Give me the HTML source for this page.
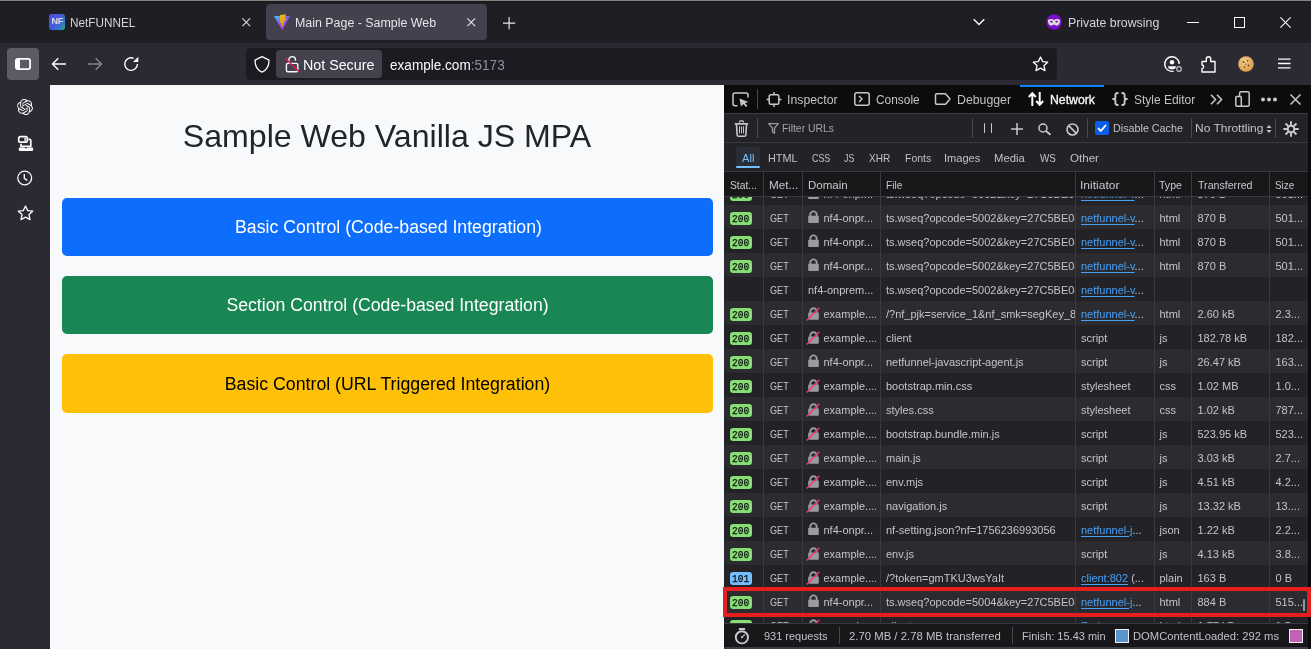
<!DOCTYPE html>
<html><head><meta charset="utf-8">
<style>
*{box-sizing:border-box;margin:0;padding:0}
html,body{width:1311px;height:649px;overflow:hidden;background:#1f1e25;font-family:"Liberation Sans",sans-serif;position:relative}
.a{position:absolute}
.t{position:absolute;white-space:nowrap;line-height:1}
svg{position:absolute;overflow:visible}
</style></head><body><div id="wrap" style="position:absolute;left:0;top:0;width:1311px;height:649px;overflow:hidden;will-change:transform">
<!-- top line -->
<div class="a" style="left:0;top:0;width:1311px;height:1px;background:#858482"></div>
<div class="a" style="left:0;top:1px;width:1311px;height:1px;background:#1a191e"></div>

<!-- TAB STRIP -->
<div id="tabs">
<div class="a" style="left:49px;top:14px;width:16px;height:16px;border-radius:3px;background:linear-gradient(125deg,#4c4fe4 0%,#4458dc 45%,#3577c4 75%,#1fb48c 100%)"></div>
<div class="t" style="left:50px;top:17.4px;width:14.4px;text-align:center;font-size:9px;font-weight:bold;color:#dcdce6;letter-spacing:-0.2px">NF</div>
<div id="netfunnel" class="t" style="left:70.5px;top:17px;font-size:12px;color:#d4d4da">NetFUNNEL</div>
<svg style="left:241.5px;top:18px" width="8.5" height="8.5" viewBox="0 0 8.5 8.5"><path d="M0.4 0.4L8.1 8.1M8.1 0.4L0.4 8.1" stroke="#d8d8de" stroke-width="1.15"/></svg>
<div class="a" style="left:266px;top:4px;width:221px;height:36px;border-radius:4px;background:#42414d"></div>
<svg style="left:274px;top:14px" width="16" height="17" viewBox="0 0 16 17"><defs><linearGradient id="vg" x1="0" y1="0" x2="0.75" y2="1"><stop offset="0" stop-color="#3fc3ee"/><stop offset="0.5" stop-color="#8a5cf0"/><stop offset="1" stop-color="#b02ae8"/></linearGradient><linearGradient id="vy" x1="0" y1="0" x2="0" y2="1"><stop offset="0" stop-color="#e6b82a"/><stop offset="1" stop-color="#e49a00"/></linearGradient></defs><path d="M0 2L16 2L8.2 16.2Z" fill="url(#vg)"/><path d="M5.9 0.9L11.9 0.3L10.8 4.3L12.3 4.5L9.2 9.6L9.9 9.7L7.9 13.8L7.3 8.9L6.1 8.8Z" fill="url(#vy)"/></svg>
<div id="maintab" class="t" style="left:295.5px;top:17px;font-size:12px;color:#e4e4ea">Main Page - Sample Web</div>
<svg style="left:466.8px;top:17.8px" width="8.5" height="8.5" viewBox="0 0 8.5 8.5"><path d="M0.4 0.4L8.1 8.1M8.1 0.4L0.4 8.1" stroke="#e0e0e6" stroke-width="1.15"/></svg>
<svg style="left:502.6px;top:16.9px" width="12.2" height="12.2" viewBox="0 0 12.2 12.2"><path d="M6.1 0V12.2M0 6.1H12.2" stroke="#e6e6ea" stroke-width="1.15"/></svg>
<svg style="left:973px;top:18px" width="12" height="8" viewBox="0 0 12 8"><path d="M0.7 1.2L6 6.5L11.3 1.2" stroke="#fbfbfe" stroke-width="1.4" fill="none"/></svg>
<svg style="left:1046px;top:14px" width="16" height="16" viewBox="0 0 16 16"><circle cx="8" cy="8" r="7.7" fill="#7a0fca"/><path d="M2 6C3.8 4.6 6.2 4.8 8 6C9.8 4.8 12.2 4.6 14 6C14.3 9.5 12.8 11.6 10.5 11.6C9.3 11.6 8.7 10.5 8 10.5C7.3 10.5 6.7 11.6 5.5 11.6C3.2 11.6 1.7 9.5 2 6Z" fill="#dcdcd6"/><path d="M3.8 7.3C4.8 6.6 6 6.8 6.9 7.6C6.4 8.9 4.7 9.2 3.8 7.3Z" fill="#7a0fca"/><path d="M12.2 7.3C11.2 6.6 10 6.8 9.1 7.6C9.6 8.9 11.3 9.2 12.2 7.3Z" fill="#7a0fca"/></svg>
<div id="private" class="t" style="left:1068.5px;top:17px;font-size:12px;color:#d4d4da">Private browsing</div>
<div class="a" style="left:1187px;top:22px;width:12px;height:1px;background:#fbfbfe"></div>
<div class="a" style="left:1234px;top:17px;width:10.5px;height:10.5px;border:1px solid #fbfbfe"></div>
<svg style="left:1279.5px;top:17px" width="11" height="11" viewBox="0 0 11 11"><path d="M0.4 0.4L10.6 10.6M10.6 0.4L0.4 10.6" stroke="#fbfbfe" stroke-width="1.1"/></svg>
</div>

<!-- TOOLBAR -->
<div class="a" style="left:0;top:43px;width:1311px;height:42px;background:#2b2a33"></div>
<div class="a" style="left:7px;top:48px;width:32px;height:32px;border-radius:4px;background:#5b5b66"></div>
<svg style="left:15px;top:58px" width="16" height="12" viewBox="0 0 16 12"><rect x="0.9" y="0.9" width="14.2" height="10.2" rx="1.8" fill="none" stroke="#fbfbfe" stroke-width="1.8"/><rect x="1" y="1" width="4" height="10" fill="#fbfbfe"/></svg>
<svg style="left:51px;top:57px" width="16" height="14" viewBox="0 0 16 14"><path d="M15 7H1.8M7.3 1.3L1.5 7L7.3 12.7" stroke="#fbfbfe" stroke-width="1.5" fill="none"/></svg>
<svg style="left:87px;top:57px" width="16" height="14" viewBox="0 0 16 14"><path d="M1 7H14.2M8.7 1.3L14.5 7L8.7 12.7" stroke="#85858f" stroke-width="1.4" fill="none"/></svg>
<svg style="left:123px;top:56px" width="16" height="16" viewBox="0 0 16 16"><path d="M14.4 8.1A6.3 6.3 0 1 1 10.6 2.3" stroke="#fbfbfe" stroke-width="1.4" fill="none"/><path d="M10 6.1L15.3 6.1L15.3 0.7Z" fill="#fbfbfe"/></svg>
<div class="a" style="left:246px;top:48px;width:811px;height:32px;border-radius:4px;background:#1c1b22"></div>
<svg style="left:254px;top:56px" width="16" height="17" viewBox="0 0 16 17"><path d="M8 0.7L15 4.2C15 10 12.5 14.2 8 16.1C3.5 14.2 1 10 1 4.2Z" stroke="#fbfbfe" stroke-width="1.3" fill="none" stroke-linejoin="round"/></svg>
<div class="a" style="left:276px;top:50px;width:106px;height:28px;border-radius:4px;background:#42414d"></div>
<svg style="left:284px;top:56px" width="16" height="17" viewBox="0 0 16 17"><path d="M4.9 7.4V3.9A3.3 3.3 0 0 1 11.5 3.9V4.8" stroke="#fbfbfe" stroke-width="1.4" fill="none"/><rect x="2.4" y="7.4" width="11.4" height="8.4" rx="1.5" stroke="#fbfbfe" stroke-width="1.4" fill="none"/><path d="M1.2 2.3L14.8 15.5" stroke="#e8174a" stroke-width="1.5"/></svg>
<div id="notsecure" class="t" style="left:304px;top:58.2px;font-size:14px;color:#fbfbfe">Not Secure</div>
<div id="url" class="t" style="left:390px;top:58.2px;font-size:14px;color:#fbfbfe">example.com<span style="color:#8f8f9d">:5173</span></div>
<svg style="left:1032px;top:56px" width="17" height="16" viewBox="0 0 17 16"><path d="M8.5 1L10.7 5.6L15.7 6.2L12 9.6L13 14.6L8.5 12.1L4 14.6L5 9.6L1.3 6.2L6.3 5.6Z" stroke="#fbfbfe" stroke-width="1.3" fill="none" stroke-linejoin="round"/></svg>
<svg style="left:1164px;top:56px" width="19" height="17" viewBox="0 0 19 17"><path d="M15.3 8A7.3 7.3 0 1 0 9.5 15.2" stroke="#fbfbfe" stroke-width="1.4" fill="none"/><circle cx="8" cy="6.2" r="2.2" fill="#fbfbfe"/><path d="M4 10.2H12L11.4 12.2C10.5 13 9.5 13.3 8 13.3C6.5 13.3 5.5 13 4.6 12.2Z" fill="#fbfbfe"/><circle cx="15" cy="13" r="2.3" stroke="#bfbfc9" stroke-width="1.2" fill="none"/></svg>
<svg style="left:1201px;top:56px" width="16" height="17" viewBox="0 0 16 17"><path d="M1 5.5H5.3V3A2.2 2.2 0 0 1 9.7 3V5.5H14V16H1V12.4A1.7 1.7 0 0 0 1 9Z" stroke="#fbfbfe" stroke-width="1.4" fill="none" stroke-linejoin="round"/></svg>
<svg style="left:1238px;top:56px" width="16" height="16" viewBox="0 0 16 16"><defs><radialGradient id="ck" cx="0.4" cy="0.35" r="0.7"><stop offset="0" stop-color="#f5c98a"/><stop offset="1" stop-color="#d89a4a"/></radialGradient></defs><circle cx="8" cy="8" r="7.8" fill="url(#ck)"/><circle cx="5.5" cy="6" r="0.9" fill="#6b3d1c"/><circle cx="9.5" cy="4.8" r="0.8" fill="#6b3d1c"/><circle cx="10.5" cy="9.5" r="0.9" fill="#6b3d1c"/><circle cx="6.5" cy="11" r="0.8" fill="#6b3d1c"/><circle cx="7.8" cy="8.2" r="0.6" fill="#6b3d1c"/></svg>
<svg style="left:1278px;top:58px" width="13" height="11" viewBox="0 0 13 11"><path d="M0 1.2H12.5M0 5.5H12.5M0 9.8H12.5" stroke="#fbfbfe" stroke-width="1.3"/></svg>

<!-- SIDEBAR -->
<div class="a" style="left:0;top:85px;width:50px;height:564px;background:#2b2a33"></div>
<svg style="left:17px;top:99px" width="16" height="16" viewBox="0 0 24 24"><path fill="#fbfbfe" d="M22.28 9.82a5.98 5.98 0 0 0-.52-4.91 6.05 6.05 0 0 0-6.51-2.9A6.07 6.07 0 0 0 4.98 4.18a5.98 5.98 0 0 0-4 2.9 6.05 6.05 0 0 0 .74 7.1 5.98 5.98 0 0 0 .51 4.91 6.05 6.05 0 0 0 6.52 2.9A5.98 5.98 0 0 0 13.26 24a6.06 6.06 0 0 0 5.77-4.21 5.99 5.99 0 0 0 4-2.9 6.06 6.06 0 0 0-.75-7.07zM13.26 22.43a4.48 4.48 0 0 1-2.88-1.04l.14-.08 4.78-2.76a.8.8 0 0 0 .39-.68v-6.74l2.02 1.17a.07.07 0 0 1 .04.05v5.58a4.5 4.5 0 0 1-4.49 4.5zM3.6 18.3a4.47 4.47 0 0 1-.54-3.01l.14.09 4.78 2.76a.77.77 0 0 0 .78 0l5.84-3.37v2.33a.08.08 0 0 1-.03.06L9.74 19.95a4.5 4.5 0 0 1-6.14-1.65zM2.34 7.9a4.49 4.49 0 0 1 2.37-1.97V11.6a.77.77 0 0 0 .39.68l5.81 3.36-2.02 1.17a.08.08 0 0 1-.07 0l-4.83-2.79A4.5 4.5 0 0 1 2.34 7.87zm16.6 3.86L13.1 8.36 15.12 7.2a.08.08 0 0 1 .07 0l4.83 2.79a4.49 4.49 0 0 1-.68 8.1v-5.68a.79.79 0 0 0-.4-.66zm2.01-3.02l-.14-.09-4.77-2.78a.78.78 0 0 0-.79 0L9.41 9.23V6.9a.07.07 0 0 1 .03-.06l4.83-2.79a4.5 4.5 0 0 1 6.68 4.66zM8.31 12.86L6.29 11.7a.08.08 0 0 1-.04-.06V6.07a4.5 4.5 0 0 1 7.38-3.45l-.14.08L8.7 5.46a.8.8 0 0 0-.39.68zm1.1-2.37l2.6-1.5 2.61 1.5v3l-2.6 1.5-2.61-1.5z"/></svg>
<svg style="left:17px;top:135px" width="17" height="17" viewBox="0 0 17 17"><rect x="1.7" y="1.7" width="8.6" height="5.4" rx="1.7" stroke="#fbfbfe" stroke-width="1.7" fill="none"/><rect x="7.4" y="2.6" width="1.4" height="3.6" fill="#fbfbfe"/><path d="M11.3 4.4H12.8A1 1 0 0 1 13.8 5.4V11.3H4V8.8" stroke="#fbfbfe" stroke-width="1.7" fill="none"/><rect x="1.8" y="12.6" width="14.3" height="3.3" rx="0.9" fill="#fbfbfe"/><ellipse cx="8.9" cy="12.7" rx="1.3" ry="0.6" fill="#2b2a33"/></svg>
<svg style="left:17px;top:170px" width="16" height="16" viewBox="0 0 16 16"><circle cx="7.7" cy="8" r="6.9" stroke="#fbfbfe" stroke-width="1.3" fill="none"/><path d="M7.3 3.9V8.4L10.3 10.4" stroke="#fbfbfe" stroke-width="1.3" fill="none"/></svg>
<svg style="left:16.5px;top:205px" width="17" height="16" viewBox="0 0 17 16"><path d="M8.5 1L10.7 5.6L15.7 6.2L12 9.6L13 14.6L8.5 12.1L4 14.6L5 9.6L1.3 6.2L6.3 5.6Z" stroke="#fbfbfe" stroke-width="1.3" fill="none" stroke-linejoin="round"/></svg>

<!-- PAGE -->
<div class="a" style="left:50px;top:85px;width:674px;height:564px;background:#f8f9fa"></div>
<div id="title" class="t" style="left:50px;width:674px;text-align:center;top:119.9px;font-size:32px;color:#212529">Sample Web Vanilla JS MPA</div>
<div class="a" style="left:62px;top:198px;width:651px;height:58px;border-radius:5px;background:#0d6efd"></div>
<div id="btn1" class="t" style="left:62px;width:651px;text-align:center;top:219.1px;font-size:17.6px;color:#fff">Basic Control (Code-based Integration)</div>
<div class="a" style="left:62px;top:276px;width:651px;height:58px;border-radius:5px;background:#198754"></div>
<div id="btn2" class="t" style="left:62px;width:651px;text-align:center;top:297.1px;font-size:17.6px;color:#fff">Section Control (Code-based Integration)</div>
<div class="a" style="left:62px;top:354px;width:651px;height:58.6px;border-radius:5px;background:#ffc107"></div>
<div id="btn3" class="t" style="left:62px;width:651px;text-align:center;top:376.1px;font-size:17.6px;color:#000">Basic Control (URL Triggered Integration)</div>

<!-- DEVTOOLS -->
<div class="a" style="left:724px;top:85px;width:587px;height:564px;background:#0c0c0d"></div>
<div class="a" style="left:724px;top:85px;width:584px;height:28px;background:#0c0c0d"></div>
<div class="a" style="left:724px;top:113px;width:584px;height:1px;background:#3a3a3f"></div>
<div class="a" style="left:724px;top:114px;width:584px;height:28px;background:#232327"></div>
<div class="a" style="left:724px;top:142px;width:584px;height:1px;background:#3a3a3f"></div>
<div class="a" style="left:724px;top:143px;width:584px;height:28px;background:#232327"></div>
<div class="a" style="left:724px;top:171px;width:584px;height:1px;background:#3a3a3f"></div>
<div class="a" style="left:724px;top:172px;width:584px;height:24px;background:#18181a"></div>
<div class="a" style="left:724px;top:196px;width:584px;height:1px;background:#3a3a3f"></div>
<div class="a" style="left:724px;top:197px;width:584px;height:426px;overflow:hidden">
<div class="a" style="left:-724px;top:-197px;width:1311px;height:649px">
<div class="a" style="left:724px;top:181px;width:584px;height:24px;background:#232327"></div>
<div class="a" style="left:730px;top:188px;width:22px;height:13px;border-radius:3px;background:#86de74"></div>
<div class="t" style="left:732.3px;top:190.6px;font-family:'Liberation Mono';font-size:10px;color:#0c0c0d;-webkit-text-stroke:0.25px #0c0c0d;transform:scaleX(0.95);transform-origin:0 0">200</div>
<div class="t" style="left:769.5px;top:188.7px;font-size:11px;color:#c4c4c8;transform:scaleX(0.83);transform-origin:0 0">GET</div>
<svg style="left:808px;top:187px" width="11" height="12" viewBox="0 0 11 12"><path d="M2.3 5V3.6A3.2 3.2 0 0 1 8.7 3.6V5" stroke="#9b9b9f" stroke-width="1.9" fill="none"/><rect x="0.2" y="4.8" width="10.6" height="7.2" rx="0.8" fill="#9b9b9f"/></svg>
<div class="t" style="left:823.5px;top:188.7px;font-size:11px;color:#c4c4c8;width:52.5px;overflow:hidden">nf4-onpr...</div>
<div class="t" style="left:886px;top:188.7px;font-size:11px;color:#c4c4c8;width:189px;overflow:hidden">ts.wseq?opcode=5002&amp;key=27C5BE08</div>
<div class="t" style="left:1081px;top:188.7px;font-size:11px;color:#c4c4c8"><span style="color:#45a1f5;text-decoration:underline;text-underline-offset:2px">netfunnel-v</span>...</div>
<div class="t" style="left:1159.5px;top:188.7px;font-size:11px;color:#c4c4c8">html</div>
<div class="t" style="left:1197.5px;top:188.7px;font-size:11px;color:#c4c4c8">870 B</div>
<div class="t" style="left:1275.5px;top:188.7px;font-size:11px;color:#c4c4c8">501...</div>
<div class="a" style="left:724px;top:205px;width:584px;height:24px;background:#2c2b30"></div>
<div class="a" style="left:730px;top:212px;width:22px;height:13px;border-radius:3px;background:#86de74"></div>
<div class="t" style="left:732.3px;top:214.6px;font-family:'Liberation Mono';font-size:10px;color:#0c0c0d;-webkit-text-stroke:0.25px #0c0c0d;transform:scaleX(0.95);transform-origin:0 0">200</div>
<div class="t" style="left:769.5px;top:212.7px;font-size:11px;color:#c4c4c8;transform:scaleX(0.83);transform-origin:0 0">GET</div>
<svg style="left:808px;top:211px" width="11" height="12" viewBox="0 0 11 12"><path d="M2.3 5V3.6A3.2 3.2 0 0 1 8.7 3.6V5" stroke="#9b9b9f" stroke-width="1.9" fill="none"/><rect x="0.2" y="4.8" width="10.6" height="7.2" rx="0.8" fill="#9b9b9f"/></svg>
<div class="t" style="left:823.5px;top:212.7px;font-size:11px;color:#c4c4c8;width:52.5px;overflow:hidden">nf4-onpr...</div>
<div class="t" style="left:886px;top:212.7px;font-size:11px;color:#c4c4c8;width:189px;overflow:hidden">ts.wseq?opcode=5002&amp;key=27C5BE08</div>
<div class="t" style="left:1081px;top:212.7px;font-size:11px;color:#c4c4c8"><span style="color:#45a1f5;text-decoration:underline;text-underline-offset:2px">netfunnel-v</span>...</div>
<div class="t" style="left:1159.5px;top:212.7px;font-size:11px;color:#c4c4c8">html</div>
<div class="t" style="left:1197.5px;top:212.7px;font-size:11px;color:#c4c4c8">870 B</div>
<div class="t" style="left:1275.5px;top:212.7px;font-size:11px;color:#c4c4c8">501...</div>
<div class="a" style="left:724px;top:229px;width:584px;height:24px;background:#232327"></div>
<div class="a" style="left:730px;top:236px;width:22px;height:13px;border-radius:3px;background:#86de74"></div>
<div class="t" style="left:732.3px;top:238.6px;font-family:'Liberation Mono';font-size:10px;color:#0c0c0d;-webkit-text-stroke:0.25px #0c0c0d;transform:scaleX(0.95);transform-origin:0 0">200</div>
<div class="t" style="left:769.5px;top:236.7px;font-size:11px;color:#c4c4c8;transform:scaleX(0.83);transform-origin:0 0">GET</div>
<svg style="left:808px;top:235px" width="11" height="12" viewBox="0 0 11 12"><path d="M2.3 5V3.6A3.2 3.2 0 0 1 8.7 3.6V5" stroke="#9b9b9f" stroke-width="1.9" fill="none"/><rect x="0.2" y="4.8" width="10.6" height="7.2" rx="0.8" fill="#9b9b9f"/></svg>
<div class="t" style="left:823.5px;top:236.7px;font-size:11px;color:#c4c4c8;width:52.5px;overflow:hidden">nf4-onpr...</div>
<div class="t" style="left:886px;top:236.7px;font-size:11px;color:#c4c4c8;width:189px;overflow:hidden">ts.wseq?opcode=5002&amp;key=27C5BE08</div>
<div class="t" style="left:1081px;top:236.7px;font-size:11px;color:#c4c4c8"><span style="color:#45a1f5;text-decoration:underline;text-underline-offset:2px">netfunnel-v</span>...</div>
<div class="t" style="left:1159.5px;top:236.7px;font-size:11px;color:#c4c4c8">html</div>
<div class="t" style="left:1197.5px;top:236.7px;font-size:11px;color:#c4c4c8">870 B</div>
<div class="t" style="left:1275.5px;top:236.7px;font-size:11px;color:#c4c4c8">501...</div>
<div class="a" style="left:724px;top:253px;width:584px;height:24px;background:#2c2b30"></div>
<div class="a" style="left:730px;top:260px;width:22px;height:13px;border-radius:3px;background:#86de74"></div>
<div class="t" style="left:732.3px;top:262.6px;font-family:'Liberation Mono';font-size:10px;color:#0c0c0d;-webkit-text-stroke:0.25px #0c0c0d;transform:scaleX(0.95);transform-origin:0 0">200</div>
<div class="t" style="left:769.5px;top:260.7px;font-size:11px;color:#c4c4c8;transform:scaleX(0.83);transform-origin:0 0">GET</div>
<svg style="left:808px;top:259px" width="11" height="12" viewBox="0 0 11 12"><path d="M2.3 5V3.6A3.2 3.2 0 0 1 8.7 3.6V5" stroke="#9b9b9f" stroke-width="1.9" fill="none"/><rect x="0.2" y="4.8" width="10.6" height="7.2" rx="0.8" fill="#9b9b9f"/></svg>
<div class="t" style="left:823.5px;top:260.7px;font-size:11px;color:#c4c4c8;width:52.5px;overflow:hidden">nf4-onpr...</div>
<div class="t" style="left:886px;top:260.7px;font-size:11px;color:#c4c4c8;width:189px;overflow:hidden">ts.wseq?opcode=5002&amp;key=27C5BE08</div>
<div class="t" style="left:1081px;top:260.7px;font-size:11px;color:#c4c4c8"><span style="color:#45a1f5;text-decoration:underline;text-underline-offset:2px">netfunnel-v</span>...</div>
<div class="t" style="left:1159.5px;top:260.7px;font-size:11px;color:#c4c4c8">html</div>
<div class="t" style="left:1197.5px;top:260.7px;font-size:11px;color:#c4c4c8">870 B</div>
<div class="t" style="left:1275.5px;top:260.7px;font-size:11px;color:#c4c4c8">501...</div>
<div class="a" style="left:724px;top:277px;width:584px;height:24px;background:#232327"></div>
<div class="t" style="left:769.5px;top:284.7px;font-size:11px;color:#c4c4c8;transform:scaleX(0.83);transform-origin:0 0">GET</div>
<div class="t" style="left:808px;top:284.7px;font-size:11px;color:#c4c4c8;width:68px;overflow:hidden">nf4-onprem...</div>
<div class="t" style="left:886px;top:284.7px;font-size:11px;color:#c4c4c8;width:189px;overflow:hidden">ts.wseq?opcode=5002&amp;key=27C5BE08</div>
<div class="t" style="left:1081px;top:284.7px;font-size:11px;color:#c4c4c8"><span style="color:#45a1f5;text-decoration:underline;text-underline-offset:2px">netfunnel-v</span>...</div>
<div class="a" style="left:724px;top:301px;width:584px;height:24px;background:#2c2b30"></div>
<div class="a" style="left:730px;top:308px;width:22px;height:13px;border-radius:3px;background:#86de74"></div>
<div class="t" style="left:732.3px;top:310.6px;font-family:'Liberation Mono';font-size:10px;color:#0c0c0d;-webkit-text-stroke:0.25px #0c0c0d;transform:scaleX(0.95);transform-origin:0 0">200</div>
<div class="t" style="left:769.5px;top:308.7px;font-size:11px;color:#c4c4c8;transform:scaleX(0.83);transform-origin:0 0">GET</div>
<svg style="left:805.5px;top:306.5px" width="14" height="14" viewBox="0 0 14 14"><path d="M4.3 5.8V4.4A3.2 3.2 0 0 1 10.7 4.4V5.8" stroke="#9b9b9f" stroke-width="1.9" fill="none"/><rect x="2.2" y="5.6" width="10.6" height="7.2" rx="0.8" fill="#9b9b9f"/><path d="M0.6 13.4L13.4 0.8" stroke="#f0356a" stroke-width="1.4"/></svg>
<div class="t" style="left:823.5px;top:308.7px;font-size:11px;color:#c4c4c8;width:52.5px;overflow:hidden">example....</div>
<div class="t" style="left:886px;top:308.7px;font-size:11px;color:#c4c4c8;width:189px;overflow:hidden">/?nf_pjk=service_1&amp;nf_smk=segKey_8401</div>
<div class="t" style="left:1081px;top:308.7px;font-size:11px;color:#c4c4c8"><span style="color:#45a1f5;text-decoration:underline;text-underline-offset:2px">netfunnel-v</span>...</div>
<div class="t" style="left:1159.5px;top:308.7px;font-size:11px;color:#c4c4c8">html</div>
<div class="t" style="left:1197.5px;top:308.7px;font-size:11px;color:#c4c4c8">2.60 kB</div>
<div class="t" style="left:1275.5px;top:308.7px;font-size:11px;color:#c4c4c8">2.3...</div>
<div class="a" style="left:724px;top:325px;width:584px;height:24px;background:#232327"></div>
<div class="a" style="left:730px;top:332px;width:22px;height:13px;border-radius:3px;background:#86de74"></div>
<div class="t" style="left:732.3px;top:334.6px;font-family:'Liberation Mono';font-size:10px;color:#0c0c0d;-webkit-text-stroke:0.25px #0c0c0d;transform:scaleX(0.95);transform-origin:0 0">200</div>
<div class="t" style="left:769.5px;top:332.7px;font-size:11px;color:#c4c4c8;transform:scaleX(0.83);transform-origin:0 0">GET</div>
<svg style="left:805.5px;top:330.5px" width="14" height="14" viewBox="0 0 14 14"><path d="M4.3 5.8V4.4A3.2 3.2 0 0 1 10.7 4.4V5.8" stroke="#9b9b9f" stroke-width="1.9" fill="none"/><rect x="2.2" y="5.6" width="10.6" height="7.2" rx="0.8" fill="#9b9b9f"/><path d="M0.6 13.4L13.4 0.8" stroke="#f0356a" stroke-width="1.4"/></svg>
<div class="t" style="left:823.5px;top:332.7px;font-size:11px;color:#c4c4c8;width:52.5px;overflow:hidden">example....</div>
<div class="t" style="left:886px;top:332.7px;font-size:11px;color:#c4c4c8;width:189px;overflow:hidden">client</div>
<div class="t" style="left:1081px;top:332.7px;font-size:11px;color:#c4c4c8">script</div>
<div class="t" style="left:1159.5px;top:332.7px;font-size:11px;color:#c4c4c8">js</div>
<div class="t" style="left:1197.5px;top:332.7px;font-size:11px;color:#c4c4c8">182.78 kB</div>
<div class="t" style="left:1275.5px;top:332.7px;font-size:11px;color:#c4c4c8">182...</div>
<div class="a" style="left:724px;top:349px;width:584px;height:24px;background:#2c2b30"></div>
<div class="a" style="left:730px;top:356px;width:22px;height:13px;border-radius:3px;background:#86de74"></div>
<div class="t" style="left:732.3px;top:358.6px;font-family:'Liberation Mono';font-size:10px;color:#0c0c0d;-webkit-text-stroke:0.25px #0c0c0d;transform:scaleX(0.95);transform-origin:0 0">200</div>
<div class="t" style="left:769.5px;top:356.7px;font-size:11px;color:#c4c4c8;transform:scaleX(0.83);transform-origin:0 0">GET</div>
<svg style="left:808px;top:355px" width="11" height="12" viewBox="0 0 11 12"><path d="M2.3 5V3.6A3.2 3.2 0 0 1 8.7 3.6V5" stroke="#9b9b9f" stroke-width="1.9" fill="none"/><rect x="0.2" y="4.8" width="10.6" height="7.2" rx="0.8" fill="#9b9b9f"/></svg>
<div class="t" style="left:823.5px;top:356.7px;font-size:11px;color:#c4c4c8;width:52.5px;overflow:hidden">nf4-onpr...</div>
<div class="t" style="left:886px;top:356.7px;font-size:11px;color:#c4c4c8;width:189px;overflow:hidden">netfunnel-javascript-agent.js</div>
<div class="t" style="left:1081px;top:356.7px;font-size:11px;color:#c4c4c8">script</div>
<div class="t" style="left:1159.5px;top:356.7px;font-size:11px;color:#c4c4c8">js</div>
<div class="t" style="left:1197.5px;top:356.7px;font-size:11px;color:#c4c4c8">26.47 kB</div>
<div class="t" style="left:1275.5px;top:356.7px;font-size:11px;color:#c4c4c8">163...</div>
<div class="a" style="left:724px;top:373px;width:584px;height:24px;background:#232327"></div>
<div class="a" style="left:730px;top:380px;width:22px;height:13px;border-radius:3px;background:#86de74"></div>
<div class="t" style="left:732.3px;top:382.6px;font-family:'Liberation Mono';font-size:10px;color:#0c0c0d;-webkit-text-stroke:0.25px #0c0c0d;transform:scaleX(0.95);transform-origin:0 0">200</div>
<div class="t" style="left:769.5px;top:380.7px;font-size:11px;color:#c4c4c8;transform:scaleX(0.83);transform-origin:0 0">GET</div>
<svg style="left:805.5px;top:378.5px" width="14" height="14" viewBox="0 0 14 14"><path d="M4.3 5.8V4.4A3.2 3.2 0 0 1 10.7 4.4V5.8" stroke="#9b9b9f" stroke-width="1.9" fill="none"/><rect x="2.2" y="5.6" width="10.6" height="7.2" rx="0.8" fill="#9b9b9f"/><path d="M0.6 13.4L13.4 0.8" stroke="#f0356a" stroke-width="1.4"/></svg>
<div class="t" style="left:823.5px;top:380.7px;font-size:11px;color:#c4c4c8;width:52.5px;overflow:hidden">example....</div>
<div class="t" style="left:886px;top:380.7px;font-size:11px;color:#c4c4c8;width:189px;overflow:hidden">bootstrap.min.css</div>
<div class="t" style="left:1081px;top:380.7px;font-size:11px;color:#c4c4c8">stylesheet</div>
<div class="t" style="left:1159.5px;top:380.7px;font-size:11px;color:#c4c4c8">css</div>
<div class="t" style="left:1197.5px;top:380.7px;font-size:11px;color:#c4c4c8">1.02 MB</div>
<div class="t" style="left:1275.5px;top:380.7px;font-size:11px;color:#c4c4c8">1.0...</div>
<div class="a" style="left:724px;top:397px;width:584px;height:24px;background:#2c2b30"></div>
<div class="a" style="left:730px;top:404px;width:22px;height:13px;border-radius:3px;background:#86de74"></div>
<div class="t" style="left:732.3px;top:406.6px;font-family:'Liberation Mono';font-size:10px;color:#0c0c0d;-webkit-text-stroke:0.25px #0c0c0d;transform:scaleX(0.95);transform-origin:0 0">200</div>
<div class="t" style="left:769.5px;top:404.7px;font-size:11px;color:#c4c4c8;transform:scaleX(0.83);transform-origin:0 0">GET</div>
<svg style="left:805.5px;top:402.5px" width="14" height="14" viewBox="0 0 14 14"><path d="M4.3 5.8V4.4A3.2 3.2 0 0 1 10.7 4.4V5.8" stroke="#9b9b9f" stroke-width="1.9" fill="none"/><rect x="2.2" y="5.6" width="10.6" height="7.2" rx="0.8" fill="#9b9b9f"/><path d="M0.6 13.4L13.4 0.8" stroke="#f0356a" stroke-width="1.4"/></svg>
<div class="t" style="left:823.5px;top:404.7px;font-size:11px;color:#c4c4c8;width:52.5px;overflow:hidden">example....</div>
<div class="t" style="left:886px;top:404.7px;font-size:11px;color:#c4c4c8;width:189px;overflow:hidden">styles.css</div>
<div class="t" style="left:1081px;top:404.7px;font-size:11px;color:#c4c4c8">stylesheet</div>
<div class="t" style="left:1159.5px;top:404.7px;font-size:11px;color:#c4c4c8">css</div>
<div class="t" style="left:1197.5px;top:404.7px;font-size:11px;color:#c4c4c8">1.02 kB</div>
<div class="t" style="left:1275.5px;top:404.7px;font-size:11px;color:#c4c4c8">787...</div>
<div class="a" style="left:724px;top:421px;width:584px;height:24px;background:#232327"></div>
<div class="a" style="left:730px;top:428px;width:22px;height:13px;border-radius:3px;background:#86de74"></div>
<div class="t" style="left:732.3px;top:430.6px;font-family:'Liberation Mono';font-size:10px;color:#0c0c0d;-webkit-text-stroke:0.25px #0c0c0d;transform:scaleX(0.95);transform-origin:0 0">200</div>
<div class="t" style="left:769.5px;top:428.7px;font-size:11px;color:#c4c4c8;transform:scaleX(0.83);transform-origin:0 0">GET</div>
<svg style="left:805.5px;top:426.5px" width="14" height="14" viewBox="0 0 14 14"><path d="M4.3 5.8V4.4A3.2 3.2 0 0 1 10.7 4.4V5.8" stroke="#9b9b9f" stroke-width="1.9" fill="none"/><rect x="2.2" y="5.6" width="10.6" height="7.2" rx="0.8" fill="#9b9b9f"/><path d="M0.6 13.4L13.4 0.8" stroke="#f0356a" stroke-width="1.4"/></svg>
<div class="t" style="left:823.5px;top:428.7px;font-size:11px;color:#c4c4c8;width:52.5px;overflow:hidden">example....</div>
<div class="t" style="left:886px;top:428.7px;font-size:11px;color:#c4c4c8;width:189px;overflow:hidden">bootstrap.bundle.min.js</div>
<div class="t" style="left:1081px;top:428.7px;font-size:11px;color:#c4c4c8">script</div>
<div class="t" style="left:1159.5px;top:428.7px;font-size:11px;color:#c4c4c8">js</div>
<div class="t" style="left:1197.5px;top:428.7px;font-size:11px;color:#c4c4c8">523.95 kB</div>
<div class="t" style="left:1275.5px;top:428.7px;font-size:11px;color:#c4c4c8">523...</div>
<div class="a" style="left:724px;top:445px;width:584px;height:24px;background:#2c2b30"></div>
<div class="a" style="left:730px;top:452px;width:22px;height:13px;border-radius:3px;background:#86de74"></div>
<div class="t" style="left:732.3px;top:454.6px;font-family:'Liberation Mono';font-size:10px;color:#0c0c0d;-webkit-text-stroke:0.25px #0c0c0d;transform:scaleX(0.95);transform-origin:0 0">200</div>
<div class="t" style="left:769.5px;top:452.7px;font-size:11px;color:#c4c4c8;transform:scaleX(0.83);transform-origin:0 0">GET</div>
<svg style="left:805.5px;top:450.5px" width="14" height="14" viewBox="0 0 14 14"><path d="M4.3 5.8V4.4A3.2 3.2 0 0 1 10.7 4.4V5.8" stroke="#9b9b9f" stroke-width="1.9" fill="none"/><rect x="2.2" y="5.6" width="10.6" height="7.2" rx="0.8" fill="#9b9b9f"/><path d="M0.6 13.4L13.4 0.8" stroke="#f0356a" stroke-width="1.4"/></svg>
<div class="t" style="left:823.5px;top:452.7px;font-size:11px;color:#c4c4c8;width:52.5px;overflow:hidden">example....</div>
<div class="t" style="left:886px;top:452.7px;font-size:11px;color:#c4c4c8;width:189px;overflow:hidden">main.js</div>
<div class="t" style="left:1081px;top:452.7px;font-size:11px;color:#c4c4c8">script</div>
<div class="t" style="left:1159.5px;top:452.7px;font-size:11px;color:#c4c4c8">js</div>
<div class="t" style="left:1197.5px;top:452.7px;font-size:11px;color:#c4c4c8">3.03 kB</div>
<div class="t" style="left:1275.5px;top:452.7px;font-size:11px;color:#c4c4c8">2.7...</div>
<div class="a" style="left:724px;top:469px;width:584px;height:24px;background:#232327"></div>
<div class="a" style="left:730px;top:476px;width:22px;height:13px;border-radius:3px;background:#86de74"></div>
<div class="t" style="left:732.3px;top:478.6px;font-family:'Liberation Mono';font-size:10px;color:#0c0c0d;-webkit-text-stroke:0.25px #0c0c0d;transform:scaleX(0.95);transform-origin:0 0">200</div>
<div class="t" style="left:769.5px;top:476.7px;font-size:11px;color:#c4c4c8;transform:scaleX(0.83);transform-origin:0 0">GET</div>
<svg style="left:805.5px;top:474.5px" width="14" height="14" viewBox="0 0 14 14"><path d="M4.3 5.8V4.4A3.2 3.2 0 0 1 10.7 4.4V5.8" stroke="#9b9b9f" stroke-width="1.9" fill="none"/><rect x="2.2" y="5.6" width="10.6" height="7.2" rx="0.8" fill="#9b9b9f"/><path d="M0.6 13.4L13.4 0.8" stroke="#f0356a" stroke-width="1.4"/></svg>
<div class="t" style="left:823.5px;top:476.7px;font-size:11px;color:#c4c4c8;width:52.5px;overflow:hidden">example....</div>
<div class="t" style="left:886px;top:476.7px;font-size:11px;color:#c4c4c8;width:189px;overflow:hidden">env.mjs</div>
<div class="t" style="left:1081px;top:476.7px;font-size:11px;color:#c4c4c8">script</div>
<div class="t" style="left:1159.5px;top:476.7px;font-size:11px;color:#c4c4c8">js</div>
<div class="t" style="left:1197.5px;top:476.7px;font-size:11px;color:#c4c4c8">4.51 kB</div>
<div class="t" style="left:1275.5px;top:476.7px;font-size:11px;color:#c4c4c8">4.2...</div>
<div class="a" style="left:724px;top:493px;width:584px;height:24px;background:#2c2b30"></div>
<div class="a" style="left:730px;top:500px;width:22px;height:13px;border-radius:3px;background:#86de74"></div>
<div class="t" style="left:732.3px;top:502.6px;font-family:'Liberation Mono';font-size:10px;color:#0c0c0d;-webkit-text-stroke:0.25px #0c0c0d;transform:scaleX(0.95);transform-origin:0 0">200</div>
<div class="t" style="left:769.5px;top:500.7px;font-size:11px;color:#c4c4c8;transform:scaleX(0.83);transform-origin:0 0">GET</div>
<svg style="left:805.5px;top:498.5px" width="14" height="14" viewBox="0 0 14 14"><path d="M4.3 5.8V4.4A3.2 3.2 0 0 1 10.7 4.4V5.8" stroke="#9b9b9f" stroke-width="1.9" fill="none"/><rect x="2.2" y="5.6" width="10.6" height="7.2" rx="0.8" fill="#9b9b9f"/><path d="M0.6 13.4L13.4 0.8" stroke="#f0356a" stroke-width="1.4"/></svg>
<div class="t" style="left:823.5px;top:500.7px;font-size:11px;color:#c4c4c8;width:52.5px;overflow:hidden">example....</div>
<div class="t" style="left:886px;top:500.7px;font-size:11px;color:#c4c4c8;width:189px;overflow:hidden">navigation.js</div>
<div class="t" style="left:1081px;top:500.7px;font-size:11px;color:#c4c4c8">script</div>
<div class="t" style="left:1159.5px;top:500.7px;font-size:11px;color:#c4c4c8">js</div>
<div class="t" style="left:1197.5px;top:500.7px;font-size:11px;color:#c4c4c8">13.32 kB</div>
<div class="t" style="left:1275.5px;top:500.7px;font-size:11px;color:#c4c4c8">13....</div>
<div class="a" style="left:724px;top:517px;width:584px;height:24px;background:#232327"></div>
<div class="a" style="left:730px;top:524px;width:22px;height:13px;border-radius:3px;background:#86de74"></div>
<div class="t" style="left:732.3px;top:526.6px;font-family:'Liberation Mono';font-size:10px;color:#0c0c0d;-webkit-text-stroke:0.25px #0c0c0d;transform:scaleX(0.95);transform-origin:0 0">200</div>
<div class="t" style="left:769.5px;top:524.7px;font-size:11px;color:#c4c4c8;transform:scaleX(0.83);transform-origin:0 0">GET</div>
<svg style="left:808px;top:523px" width="11" height="12" viewBox="0 0 11 12"><path d="M2.3 5V3.6A3.2 3.2 0 0 1 8.7 3.6V5" stroke="#9b9b9f" stroke-width="1.9" fill="none"/><rect x="0.2" y="4.8" width="10.6" height="7.2" rx="0.8" fill="#9b9b9f"/></svg>
<div class="t" style="left:823.5px;top:524.7px;font-size:11px;color:#c4c4c8;width:52.5px;overflow:hidden">nf4-onpr...</div>
<div class="t" style="left:886px;top:524.7px;font-size:11px;color:#c4c4c8;width:189px;overflow:hidden">nf-setting.json?nf=1756236993056</div>
<div class="t" style="left:1081px;top:524.7px;font-size:11px;color:#c4c4c8"><span style="color:#45a1f5;text-decoration:underline;text-underline-offset:2px">netfunnel-j</span>...</div>
<div class="t" style="left:1159.5px;top:524.7px;font-size:11px;color:#c4c4c8">json</div>
<div class="t" style="left:1197.5px;top:524.7px;font-size:11px;color:#c4c4c8">1.22 kB</div>
<div class="t" style="left:1275.5px;top:524.7px;font-size:11px;color:#c4c4c8">2.2...</div>
<div class="a" style="left:724px;top:541px;width:584px;height:24px;background:#2c2b30"></div>
<div class="a" style="left:730px;top:548px;width:22px;height:13px;border-radius:3px;background:#86de74"></div>
<div class="t" style="left:732.3px;top:550.6px;font-family:'Liberation Mono';font-size:10px;color:#0c0c0d;-webkit-text-stroke:0.25px #0c0c0d;transform:scaleX(0.95);transform-origin:0 0">200</div>
<div class="t" style="left:769.5px;top:548.7px;font-size:11px;color:#c4c4c8;transform:scaleX(0.83);transform-origin:0 0">GET</div>
<svg style="left:805.5px;top:546.5px" width="14" height="14" viewBox="0 0 14 14"><path d="M4.3 5.8V4.4A3.2 3.2 0 0 1 10.7 4.4V5.8" stroke="#9b9b9f" stroke-width="1.9" fill="none"/><rect x="2.2" y="5.6" width="10.6" height="7.2" rx="0.8" fill="#9b9b9f"/><path d="M0.6 13.4L13.4 0.8" stroke="#f0356a" stroke-width="1.4"/></svg>
<div class="t" style="left:823.5px;top:548.7px;font-size:11px;color:#c4c4c8;width:52.5px;overflow:hidden">example....</div>
<div class="t" style="left:886px;top:548.7px;font-size:11px;color:#c4c4c8;width:189px;overflow:hidden">env.js</div>
<div class="t" style="left:1081px;top:548.7px;font-size:11px;color:#c4c4c8">script</div>
<div class="t" style="left:1159.5px;top:548.7px;font-size:11px;color:#c4c4c8">js</div>
<div class="t" style="left:1197.5px;top:548.7px;font-size:11px;color:#c4c4c8">4.13 kB</div>
<div class="t" style="left:1275.5px;top:548.7px;font-size:11px;color:#c4c4c8">3.8...</div>
<div class="a" style="left:724px;top:565px;width:584px;height:24px;background:#232327"></div>
<div class="a" style="left:730px;top:572px;width:22px;height:13px;border-radius:3px;background:#75bfff"></div>
<div class="t" style="left:732.3px;top:574.6px;font-family:'Liberation Mono';font-size:10px;color:#0c0c0d;-webkit-text-stroke:0.25px #0c0c0d;transform:scaleX(0.95);transform-origin:0 0">101</div>
<div class="t" style="left:769.5px;top:572.7px;font-size:11px;color:#c4c4c8;transform:scaleX(0.83);transform-origin:0 0">GET</div>
<svg style="left:805.5px;top:570.5px" width="14" height="14" viewBox="0 0 14 14"><path d="M4.3 5.8V4.4A3.2 3.2 0 0 1 10.7 4.4V5.8" stroke="#9b9b9f" stroke-width="1.9" fill="none"/><rect x="2.2" y="5.6" width="10.6" height="7.2" rx="0.8" fill="#9b9b9f"/><path d="M0.6 13.4L13.4 0.8" stroke="#f0356a" stroke-width="1.4"/></svg>
<div class="t" style="left:823.5px;top:572.7px;font-size:11px;color:#c4c4c8;width:52.5px;overflow:hidden">example....</div>
<div class="t" style="left:886px;top:572.7px;font-size:11px;color:#c4c4c8;width:189px;overflow:hidden">/?token=gmTKU3wsYaIt</div>
<div class="t" style="left:1081px;top:572.7px;font-size:11px;color:#c4c4c8"><span style="color:#45a1f5;text-decoration:underline;text-underline-offset:2px">client:802</span> (...</div>
<div class="t" style="left:1159.5px;top:572.7px;font-size:11px;color:#c4c4c8">plain</div>
<div class="t" style="left:1197.5px;top:572.7px;font-size:11px;color:#c4c4c8">163 B</div>
<div class="t" style="left:1275.5px;top:572.7px;font-size:11px;color:#c4c4c8">0 B</div>
<div class="a" style="left:724px;top:589px;width:584px;height:24px;background:#2c2b30"></div>
<div class="a" style="left:730px;top:596px;width:22px;height:13px;border-radius:3px;background:#86de74"></div>
<div class="t" style="left:732.3px;top:598.6px;font-family:'Liberation Mono';font-size:10px;color:#0c0c0d;-webkit-text-stroke:0.25px #0c0c0d;transform:scaleX(0.95);transform-origin:0 0">200</div>
<div class="t" style="left:769.5px;top:596.7px;font-size:11px;color:#c4c4c8;transform:scaleX(0.83);transform-origin:0 0">GET</div>
<svg style="left:808px;top:595px" width="11" height="12" viewBox="0 0 11 12"><path d="M2.3 5V3.6A3.2 3.2 0 0 1 8.7 3.6V5" stroke="#9b9b9f" stroke-width="1.9" fill="none"/><rect x="0.2" y="4.8" width="10.6" height="7.2" rx="0.8" fill="#9b9b9f"/></svg>
<div class="t" style="left:823.5px;top:596.7px;font-size:11px;color:#c4c4c8;width:52.5px;overflow:hidden">nf4-onpr...</div>
<div class="t" style="left:886px;top:596.7px;font-size:11px;color:#c4c4c8;width:189px;overflow:hidden">ts.wseq?opcode=5004&amp;key=27C5BE08</div>
<div class="t" style="left:1081px;top:596.7px;font-size:11px;color:#c4c4c8"><span style="color:#45a1f5;text-decoration:underline;text-underline-offset:2px">netfunnel-j</span>...</div>
<div class="t" style="left:1159.5px;top:596.7px;font-size:11px;color:#c4c4c8">html</div>
<div class="t" style="left:1197.5px;top:596.7px;font-size:11px;color:#c4c4c8">884 B</div>
<div class="t" style="left:1275.5px;top:596.7px;font-size:11px;color:#c4c4c8">515...</div>
<div class="a" style="left:724px;top:613px;width:584px;height:24px;background:#232327"></div>
<div class="a" style="left:730px;top:620px;width:22px;height:13px;border-radius:3px;background:#86de74"></div>
<div class="t" style="left:732.3px;top:622.6px;font-family:'Liberation Mono';font-size:10px;color:#0c0c0d;-webkit-text-stroke:0.25px #0c0c0d;transform:scaleX(0.95);transform-origin:0 0">200</div>
<div class="t" style="left:769.5px;top:620.7px;font-size:11px;color:#c4c4c8;transform:scaleX(0.83);transform-origin:0 0">GET</div>
<svg style="left:805.5px;top:618.5px" width="14" height="14" viewBox="0 0 14 14"><path d="M4.3 5.8V4.4A3.2 3.2 0 0 1 10.7 4.4V5.8" stroke="#9b9b9f" stroke-width="1.9" fill="none"/><rect x="2.2" y="5.6" width="10.6" height="7.2" rx="0.8" fill="#9b9b9f"/><path d="M0.6 13.4L13.4 0.8" stroke="#f0356a" stroke-width="1.4"/></svg>
<div class="t" style="left:823.5px;top:620.7px;font-size:11px;color:#c4c4c8;width:52.5px;overflow:hidden">example....</div>
<div class="t" style="left:886px;top:620.7px;font-size:11px;color:#c4c4c8;width:189px;overflow:hidden">client</div>
<div class="t" style="left:1081px;top:620.7px;font-size:11px;color:#c4c4c8"><span style="color:#45a1f5;text-decoration:underline;text-underline-offset:2px">Zoder</span>...</div>
<div class="t" style="left:1159.5px;top:620.7px;font-size:11px;color:#c4c4c8">html</div>
<div class="t" style="left:1197.5px;top:620.7px;font-size:11px;color:#c4c4c8">1.77 kB</div>
<div class="t" style="left:1275.5px;top:620.7px;font-size:11px;color:#c4c4c8">1.5...</div>
<div class="a" style="left:763.0px;top:172px;width:1px;height:450px;background:#3a3a3f"></div>
<div class="a" style="left:802.0px;top:172px;width:1px;height:450px;background:#3a3a3f"></div>
<div class="a" style="left:880.0px;top:172px;width:1px;height:450px;background:#3a3a3f"></div>
<div class="a" style="left:1075.0px;top:172px;width:1px;height:450px;background:#3a3a3f"></div>
<div class="a" style="left:1153.5px;top:172px;width:1px;height:450px;background:#3a3a3f"></div>
<div class="a" style="left:1190.8px;top:172px;width:1px;height:450px;background:#3a3a3f"></div>
<div class="a" style="left:1268.9px;top:172px;width:1px;height:450px;background:#3a3a3f"></div>
</div></div>
<div class="a" style="left:763.0px;top:172px;width:1px;height:24px;background:#3a3a3f"></div>
<div class="a" style="left:802.0px;top:172px;width:1px;height:24px;background:#3a3a3f"></div>
<div class="a" style="left:880.0px;top:172px;width:1px;height:24px;background:#3a3a3f"></div>
<div class="a" style="left:1075.0px;top:172px;width:1px;height:24px;background:#3a3a3f"></div>
<div class="a" style="left:1153.5px;top:172px;width:1px;height:24px;background:#3a3a3f"></div>
<div class="a" style="left:1190.8px;top:172px;width:1px;height:24px;background:#3a3a3f"></div>
<div class="a" style="left:1268.9px;top:172px;width:1px;height:24px;background:#3a3a3f"></div>
<div id="h_Stat" class="t" style="left:730px;top:179.7px;font-size:11px;color:#c8c8cc">Stat...</div>
<div id="h_Met" class="t" style="left:769.5px;top:179.7px;font-size:11px;color:#c8c8cc">Met...</div>
<div id="h_Domain" class="t" style="left:808px;top:179.7px;font-size:11px;color:#c8c8cc">Domain</div>
<div id="h_File" class="t" style="left:885.5px;top:179.7px;font-size:11px;color:#c8c8cc">File</div>
<div id="h_Initiator" class="t" style="left:1081px;top:179.7px;font-size:11px;color:#c8c8cc">Initiator</div>
<div id="h_Type" class="t" style="left:1159.5px;top:179.7px;font-size:11px;color:#c8c8cc">Type</div>
<div id="h_Transferred" class="t" style="left:1197.5px;top:179.7px;font-size:11px;color:#c8c8cc">Transferred</div>
<div id="h_Size" class="t" style="left:1275.5px;top:179.7px;font-size:11px;color:#c8c8cc">Size</div>
<div class="a" style="left:724px;top:623px;width:584px;height:1px;background:#3a3a3f"></div>
<div class="a" style="left:724px;top:624px;width:584px;height:23px;background:#18181a"></div>
<div class="a" style="left:724px;top:647px;width:584px;height:2px;background:#3d3d42"></div>
<svg style="left:732px;top:92px" width="18" height="15" viewBox="0 0 18 15"><path d="M5.5 13.8H3A2 2 0 0 1 1 11.8V3A2 2 0 0 1 3 1H14A2 2 0 0 1 16 3V5.5" stroke="#c8c8cc" stroke-width="1.5" fill="none"/><path d="M7.5 6.5L16.5 10L13 11L15.5 14L14 15L11.5 12L9 14.5Z" fill="#c8c8cc"/></svg>
<div class="a" style="left:757px;top:89px;width:1px;height:20px;background:#48484d"></div>
<svg style="left:766px;top:92px" width="16" height="15" viewBox="0 0 16 15"><rect x="3.2" y="2.8" width="9.6" height="9.4" rx="1.5" stroke="#c8c8cc" stroke-width="1.5" fill="none"/><path d="M8 0V2.8M8 12.2V15M0.5 7.5H3.2M12.8 7.5H15.5" stroke="#c8c8cc" stroke-width="1.5"/></svg>
<div id="inspector" class="t" style="left:788px;top:93.9px;font-size:12px;color:#c2c2c6">Inspector</div>
<svg style="left:854px;top:92px" width="16" height="14" viewBox="0 0 16 14"><rect x="0.8" y="0.8" width="14.4" height="12.4" rx="2" stroke="#c8c8cc" stroke-width="1.5" fill="none"/><path d="M5 4L8 7L5 10" stroke="#c8c8cc" stroke-width="1.4" fill="none"/></svg>
<div id="console" class="t" style="left:876px;top:93.9px;font-size:12px;color:#c2c2c6">Console</div>
<svg style="left:934px;top:93px" width="17" height="12" viewBox="0 0 17 12"><path d="M1.5 2A1.2 1.2 0 0 1 2.7 0.8H11.5L16 6L11.5 11.2H2.7A1.2 1.2 0 0 1 1.5 10Z" stroke="#c8c8cc" stroke-width="1.5" fill="none" stroke-linejoin="round"/></svg>
<div id="debugger" class="t" style="left:957.7px;top:93.9px;font-size:12px;color:#c2c2c6">Debugger</div>
<div class="a" style="left:1020px;top:85px;width:84px;height:2px;background:#0a84ff"></div>
<svg style="left:1028px;top:92px" width="16" height="14" viewBox="0 0 16 14"><path d="M4.3 14V1.5M0.8 5L4.3 1.3L7.8 5" stroke="#fbfbfe" stroke-width="2" fill="none"/><path d="M11.7 0V12.5M8.2 9L11.7 12.7L15.2 9" stroke="#fbfbfe" stroke-width="2" fill="none"/></svg>
<div id="network" class="t" style="left:1049.8px;top:93.9px;font-size:12px;color:#f4f4f6;-webkit-text-stroke:0.35px #f4f4f6">Network</div>
<svg style="left:1112px;top:92px" width="16" height="15" viewBox="0 0 16 15"><path d="M5.8 1C4.1 1 3.4 1.7 3.4 3.1V5.5C3.4 6.5 2.7 7 1.1 7C2.7 7 3.4 7.5 3.4 8.5V10.9C3.4 12.3 4.1 13 5.8 13M10.2 1C11.9 1 12.6 1.7 12.6 3.1V5.5C12.6 6.5 13.3 7 14.9 7C13.3 7 12.6 7.5 12.6 8.5V10.9C12.6 12.3 11.9 13 10.2 13" stroke="#c8c8cc" stroke-width="1.9" fill="none" stroke-linecap="round" stroke-linejoin="round"/></svg>
<div id="styleed" class="t" style="left:1133.8px;top:93.9px;font-size:12px;color:#c2c2c6">Style Editor</div>
<svg style="left:1210px;top:94px" width="13" height="11" viewBox="0 0 13 11"><path d="M1 0.8L5.5 5.5L1 10.2M7 0.8L11.5 5.5L7 10.2" stroke="#c8c8cc" stroke-width="1.6" fill="none"/></svg>
<svg style="left:1235px;top:91px" width="15" height="16" viewBox="0 0 15 16"><rect x="4.6" y="0.8" width="9.6" height="14.4" rx="1.5" stroke="#c8c8cc" stroke-width="1.5" fill="none"/><rect x="0.8" y="5.5" width="5.5" height="9.7" rx="1" stroke="#c8c8cc" stroke-width="1.5" fill="#0c0c0d"/></svg>
<svg style="left:1261px;top:96.5px" width="16" height="5" viewBox="0 0 16 5"><circle cx="2" cy="2.5" r="2" fill="#c8c8cc"/><circle cx="8" cy="2.5" r="2" fill="#c8c8cc"/><circle cx="14" cy="2.5" r="2" fill="#c8c8cc"/></svg>
<svg style="left:1290px;top:94px" width="11" height="11" viewBox="0 0 11 11"><path d="M0.5 0.5L10.5 10.5M10.5 0.5L0.5 10.5" stroke="#c8c8cc" stroke-width="1.5"/></svg>
<svg style="left:734px;top:120px" width="15" height="17" viewBox="0 0 15 17"><path d="M5.6 2.6V1.7A0.9 0.9 0 0 1 6.5 0.8H8.5A0.9 0.9 0 0 1 9.4 1.7V2.6" stroke="#c8c8cc" stroke-width="1.3" fill="none"/><path d="M0.8 3.9H14.2" stroke="#c8c8cc" stroke-width="1.7"/><path d="M2.5 4.2L3.1 15A1.5 1.5 0 0 0 4.6 16.3H10.4A1.5 1.5 0 0 0 11.9 15L12.5 4.2" stroke="#c8c8cc" stroke-width="1.6" fill="none"/><path d="M5.5 6.4V13.4M7.5 6.4V13.4M9.5 6.4V13.4" stroke="#c8c8cc" stroke-width="1"/></svg>
<div class="a" style="left:757px;top:118px;width:1px;height:20px;background:#48484d"></div>
<svg style="left:767.5px;top:122.5px" width="11" height="11" viewBox="0 0 11 11"><path d="M0.7 0.7H10.3L6.5 5.2V10.3L4.5 9V5.2Z" stroke="#9a9a9e" stroke-width="1.3" fill="none" stroke-linejoin="round"/></svg>
<div id="filterurls" class="t" style="left:782px;top:123.3px;font-size:11px;color:#a4a4a8">Filter URLs</div>
<div class="a" style="left:972px;top:118px;width:1px;height:20px;background:#48484d"></div>
<div class="a" style="left:983.8px;top:123px;width:1.4px;height:10px;border-radius:1px;background:#c8c8cc"></div><div class="a" style="left:990.7px;top:123px;width:1.4px;height:10px;border-radius:1px;background:#c8c8cc"></div>
<svg style="left:1010.5px;top:123px" width="12" height="12" viewBox="0 0 12 12"><path d="M6 0V12M0 6H12" stroke="#c8c8cc" stroke-width="1.5"/></svg>
<svg style="left:1038px;top:123px" width="13" height="12" viewBox="0 0 13 12"><circle cx="5" cy="5" r="4" stroke="#c8c8cc" stroke-width="1.5" fill="none"/><path d="M8 8L12.5 11.8" stroke="#c8c8cc" stroke-width="1.8"/></svg>
<svg style="left:1065.5px;top:123px" width="13" height="13" viewBox="0 0 13 13"><circle cx="6.5" cy="6.5" r="5.5" stroke="#c8c8cc" stroke-width="1.6" fill="none"/><path d="M2.6 2.6L10.4 10.4" stroke="#c8c8cc" stroke-width="1.6"/></svg>
<div class="a" style="left:1087px;top:118px;width:1px;height:20px;background:#48484d"></div>
<div class="a" style="left:1095px;top:121px;width:14px;height:14px;border-radius:2px;background:#0b5fe6"></div>
<svg style="left:1097px;top:123px" width="10" height="10" viewBox="0 0 10 10"><path d="M1 5.2L3.8 8L9 2" stroke="#fff" stroke-width="1.8" fill="none"/></svg>
<div id="disablecache" class="t" style="left:1112.8px;top:123.3px;font-size:11px;color:#c2c2c6">Disable Cache</div>
<div class="a" style="left:1190.5px;top:118px;width:1px;height:20px;background:#48484d"></div>
<div id="nothrottling" class="t" style="left:1196px;top:123.3px;font-size:11px;color:#c2c2c6">No Throttling</div>
<svg style="left:1266px;top:123.5px" width="6" height="10" viewBox="0 0 6 10"><path d="M0.5 4L3 1L5.5 4ZM0.5 6L3 9L5.5 6Z" fill="#c8c8cc"/></svg>
<div class="a" style="left:1275px;top:118px;width:1px;height:20px;background:#48484d"></div>
<svg style="left:1283px;top:121px" width="16" height="16" viewBox="0 0 16 16"><circle cx="8" cy="8" r="3.3" stroke="#c8c8cc" stroke-width="1.9" fill="none"/><path d="M8 0.3V4.2M8 11.8V15.7M0.3 8H4.2M11.8 8H15.7M2.55 2.55L5.3 5.3M10.7 10.7L13.45 13.45M2.55 13.45L5.3 10.7M10.7 5.3L13.45 2.55" stroke="#c8c8cc" stroke-width="2"/></svg>
<div class="a" style="left:736px;top:147px;width:24px;height:21px;border-radius:2px;background:#2a2d36"></div>
<div class="a" style="left:736px;top:166px;width:24px;height:2px;border-radius:1px;background:#75bfff"></div>
<div id="ty_All" class="t" style="left:742px;top:152.7px;font-size:11px;color:#75bfff">All</div>
<div id="ty_HTML" class="t" style="left:768.5px;top:152.7px;font-size:11px;color:#c2c2c6">HTML</div>
<div id="ty_CSS" class="t" style="left:811.5px;top:152.7px;font-size:11px;color:#c2c2c6">CSS</div>
<div id="ty_JS" class="t" style="left:844.3px;top:152.7px;font-size:11px;color:#c2c2c6">JS</div>
<div id="ty_XHR" class="t" style="left:868.3px;top:152.7px;font-size:11px;color:#c2c2c6">XHR</div>
<div id="ty_Fonts" class="t" style="left:903.8px;top:152.7px;font-size:11px;color:#c2c2c6">Fonts</div>
<div id="ty_Images" class="t" style="left:945px;top:152.7px;font-size:11px;color:#c2c2c6">Images</div>
<div id="ty_Media" class="t" style="left:994.8px;top:152.7px;font-size:11px;color:#c2c2c6">Media</div>
<div id="ty_WS" class="t" style="left:1039.6px;top:152.7px;font-size:11px;color:#c2c2c6">WS</div>
<div id="ty_Other" class="t" style="left:1069.8px;top:152.7px;font-size:11px;color:#c2c2c6">Other</div>
<svg style="left:734px;top:627px" width="16" height="18" viewBox="0 0 16 18"><rect x="4.9" y="1" width="6.2" height="2" fill="#c8c8cc"/><circle cx="7.9" cy="10.3" r="6.1" stroke="#c8c8cc" stroke-width="1.9" fill="none"/><path d="M7.9 10.3L10.9 7.3" stroke="#c8c8cc" stroke-width="1.1"/><circle cx="7.9" cy="10.3" r="1" fill="#c8c8cc"/></svg>
<div id="f931" class="t" style="left:764px;top:631.2px;font-size:11px;color:#c2c2c6">931 requests</div>
<div class="a" style="left:838.5px;top:627px;width:1px;height:17px;background:#48484d"></div>
<div id="ftrans" class="t" style="left:849px;top:631.2px;font-size:11px;color:#c2c2c6">2.70 MB / 2.78 MB transferred</div>
<div class="a" style="left:1011.5px;top:627px;width:1px;height:17px;background:#48484d"></div>
<div id="ffinish" class="t" style="left:1022px;top:631.2px;font-size:11px;color:#c2c2c6">Finish: 15.43 min</div>
<div class="a" style="left:1115px;top:629px;width:14px;height:14px;background:#5b93cc;border:1px solid #f0f0f2"></div>
<div id="fdom" class="t" style="left:1134px;top:631.2px;font-size:11px;color:#c2c2c6">DOMContentLoaded: 292 ms</div>
<div class="a" style="left:1289px;top:629px;width:14px;height:14px;background:#c462b8;border:1px solid #f0f0f2"></div>
<div class="a" style="left:1303px;top:599.3px;width:2.2px;height:11.6px;border-radius:1px;background:#8f9c9e"></div>
<div class="a" style="left:1308px;top:85px;width:3px;height:564px;background:#0c0c0d"></div>
<div class="a" style="left:723px;top:587px;width:588px;height:30px;border:4px solid #e61e1e"></div>
</div><style>#netfunnel{transform:scaleX(0.9807);transform-origin:0 0;margin-left:-0.71px}#maintab{transform:scaleX(1.0340);transform-origin:0 0;margin-left:-0.63px}#private{transform:scaleX(1.0287);transform-origin:0 0;margin-left:-0.52px}#notsecure{transform:scaleX(1.0191);transform-origin:0 0;margin-left:-1.02px}#url{transform:scaleX(0.9696);transform-origin:0 0;margin-left:0.00px}#title{transform:scaleX(1.0025);transform-origin:50% 0;margin-left:0.10px}#btn1{transform:scaleX(1.0059);transform-origin:50% 0;margin-left:0.50px}#btn2{transform:scaleX(1.0044);transform-origin:50% 0;margin-left:0.00px}#btn3{transform:scaleX(1.0075);transform-origin:50% 0;margin-left:0.00px}#inspector{transform:scaleX(1.0253);transform-origin:0 0;margin-left:-1.03px}#console{transform:scaleX(0.9914);transform-origin:0 0;margin-left:0.00px}#debugger{transform:scaleX(1.0249);transform-origin:0 0;margin-left:-0.81px}#network{transform:scaleX(1.0203);transform-origin:0 0;margin-left:-0.16px}#styleed{transform:scaleX(0.9985);transform-origin:0 0;margin-left:0.20px}#filterurls{transform:scaleX(0.9455);transform-origin:0 0;margin-left:0.00px}#disablecache{transform:scaleX(0.9777);transform-origin:0 0;margin-left:0.20px}#nothrottling{transform:scaleX(1.0899);transform-origin:0 0;margin-left:-0.91px}#ty_All{transform:scaleX(1.0188);transform-origin:0 0;margin-left:-0.09px}#ty_HTML{transform:scaleX(0.9910);transform-origin:0 0;margin-left:-0.49px}#ty_CSS{transform:scaleX(0.8067);transform-origin:0 0;margin-left:0.35px}#ty_JS{transform:scaleX(0.8000);transform-origin:0 0;margin-left:-0.36px}#ty_XHR{transform:scaleX(0.9130);transform-origin:0 0;margin-left:0.47px}#ty_Fonts{transform:scaleX(0.9500);transform-origin:0 0;margin-left:0.79px}#ty_Images{transform:scaleX(1.0049);transform-origin:0 0;margin-left:-1.23px}#ty_Media{transform:scaleX(1.0285);transform-origin:0 0;margin-left:-0.82px}#ty_WS{transform:scaleX(0.8961);transform-origin:0 0;margin-left:0.38px}#ty_Other{transform:scaleX(1.0517);transform-origin:0 0;margin-left:0.22px}#h_Stat{transform:scaleX(0.9366);transform-origin:0 0;margin-left:0.20px}#h_Met{transform:scaleX(1.0591);transform-origin:0 0;margin-left:-0.69px}#h_Domain{transform:scaleX(1.0491);transform-origin:0 0;margin-left:-0.34px}#h_File{transform:scaleX(0.9169);transform-origin:0 0;margin-left:0.40px}#h_Initiator{transform:scaleX(1.0946);transform-origin:0 0;margin-left:-1.03px}#h_Type{transform:scaleX(0.9583);transform-origin:0 0;margin-left:-0.22px}#h_Transferred{transform:scaleX(0.9652);transform-origin:0 0;margin-left:0.08px}#h_Size{transform:scaleX(0.8972);transform-origin:0 0;margin-left:-0.45px}#f931{transform:scaleX(0.9970);transform-origin:0 0;margin-left:0.20px}#ftrans{transform:scaleX(1.0307);transform-origin:0 0;margin-left:0.10px}#ffinish{transform:scaleX(0.9977);transform-origin:0 0;margin-left:0.20px}#fdom{transform:scaleX(1.0210);transform-origin:0 0;margin-left:-1.01px}</style>
</body></html>
